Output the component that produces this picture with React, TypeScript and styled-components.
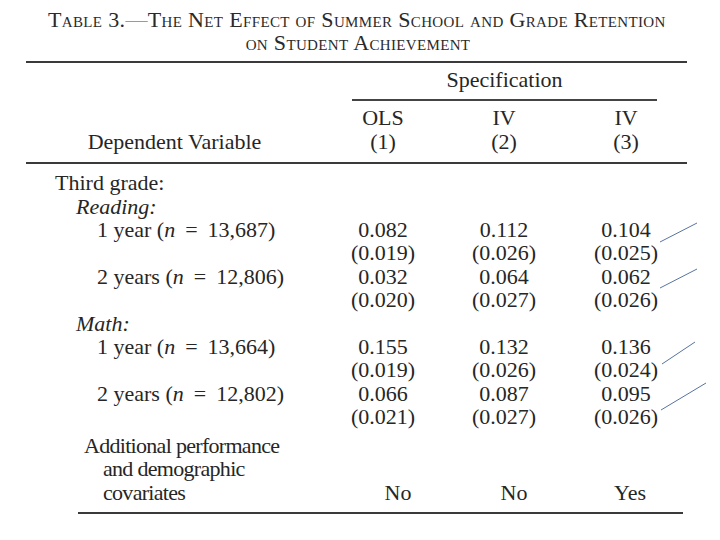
import React from "react";
import styled, { createGlobalStyle } from "styled-components";

const GlobalStyle = createGlobalStyle`
  html, body { margin: 0; padding: 0; background: #ffffff; }
  body {
    font-family: "Liberation Serif", "Times New Roman", serif;
    color: #262626;
  }
`;

const Page = styled.div`
  position: relative;
  width: 720px;
  height: 540px;
  overflow: hidden;
  background: #ffffff;
`;

const TitleBlock = styled.header`
  padding-top: 8px;
  font-size: 22px;
  line-height: 23px;
  font-variant: small-caps;
  letter-spacing: 0.35px;
  color: #2a2a2a;
`;

const TitleLine = styled.div<{ $lead?: boolean }>`
  white-space: nowrap;
  ${(p) =>
    p.$lead
      ? "padding-left: 48px;"
      : "text-align: center; padding-right: 4px;"}
`;

const Dash = styled.span`
  color: #9a9a9a;
`;

const Table = styled.section`
  margin-top: 7px;
  margin-left: 26px;
  width: 661px;
  font-size: 22px;
  line-height: 23.4px;
`;

const Rule = styled.div<{ $inset?: number; $width?: number; $thick?: number }>`
  margin-left: ${(p) => p.$inset ?? 0}px;
  width: ${(p) => (p.$width ? `${p.$width}px` : "100%")};
  border-top: ${(p) => p.$thick ?? 2}px solid #3a3a3a;
`;

const Grid = styled.div<{ $pad?: number }>`
  display: grid;
  grid-template-columns: 297px 120px 122px 122px;
  align-items: end;
  padding-top: ${(p) => p.$pad ?? 0}px;
`;

const SpecCell = styled.div`
  grid-column: 2 / 5;
  margin: 0 30px 0 29px;
  text-align: center;
`;

const SpecRule = styled.div`
  margin-top: 8px;
  border-top: 2px solid #444;
`;

const HeaderBlock = styled.div`
  padding-top: 5px;
  padding-bottom: 9px;
`;

const DepLabel = styled.div`
  text-align: center;
`;

const ColHead = styled.div`
  text-align: center;
`;

const Body = styled.div`
  padding-top: 7px;
  padding-bottom: 8px;
`;

const Label = styled.div<{ $indent: number; $italic?: boolean }>`
  padding-left: ${(p) => p.$indent}px;
  font-style: ${(p) => (p.$italic ? "italic" : "normal")};
  white-space: nowrap;
`;

const Cell = styled.div<{ $shift?: number }>`
  text-align: center;
  white-space: nowrap;
  transform: translateX(${(p) => p.$shift ?? 0}px);
`;

const Eq = styled.span`
  margin: 0 10px;
`;

const Ital = styled.i`
  font-style: italic;
`;

const Covariates = styled.div`
  padding-left: 58px;
  letter-spacing: -0.7px;
`;

const CovLine = styled.div<{ $indent?: number }>`
  padding-left: ${(p) => p.$indent ?? 0}px;
  white-space: nowrap;
`;

const Overlay = styled.svg`
  position: absolute;
  left: 0;
  top: 0;
  pointer-events: none;
`;

type Row = { label: React.ReactNode; indent: number; italic?: boolean; values?: string[] };

const N = ({ v }: { v: string }) => (
  <>
    (<Ital>n</Ital>
    <Eq>=</Eq>
    {v})
  </>
);

const rows: Row[] = [
  { label: "Third grade:", indent: 29 },
  { label: "Reading:", indent: 50, italic: true },
  { label: <>1 year <N v="13,687" /></>, indent: 71, values: ["0.082", "0.112", "0.104"] },
  { label: "", indent: 71, values: ["(0.019)", "(0.026)", "(0.025)"] },
  { label: <>2 years <N v="12,806" /></>, indent: 71, values: ["0.032", "0.064", "0.062"] },
  { label: "", indent: 71, values: ["(0.020)", "(0.027)", "(0.026)"] },
  { label: "Math:", indent: 50, italic: true },
  { label: <>1 year <N v="13,664" /></>, indent: 71, values: ["0.155", "0.132", "0.136"] },
  { label: "", indent: 71, values: ["(0.019)", "(0.026)", "(0.024)"] },
  { label: <>2 years <N v="12,802" /></>, indent: 71, values: ["0.066", "0.087", "0.095"] },
  { label: "", indent: 71, values: ["(0.021)", "(0.027)", "(0.026)"] },
];

const marks = [
  [660, 242, 697, 223],
  [660, 288, 697, 269],
  [662, 364, 695, 342],
  [661, 410, 706, 383],
];

export default function App() {
  return (
    <Page>
      <GlobalStyle />
      <TitleBlock>
        <TitleLine $lead>
          Table 3.<Dash>—</Dash>The Net Effect of Summer School and Grade Retention
        </TitleLine>
        <TitleLine>on Student Achievement</TitleLine>
      </TitleBlock>

      <Table>
        <Rule />
        <HeaderBlock>
          <Grid>
            <div />
            <SpecCell>
              Specification
              <SpecRule />
            </SpecCell>
          </Grid>
          <Grid $pad={5}>
            <div />
            <ColHead>OLS</ColHead>
            <ColHead>IV</ColHead>
            <ColHead>IV</ColHead>
            <DepLabel>Dependent Variable</DepLabel>
            <ColHead>(1)</ColHead>
            <ColHead>(2)</ColHead>
            <ColHead>(3)</ColHead>
          </Grid>
        </HeaderBlock>
        <Rule />
        <Body>
          {rows.map((r, i) => (
            <Grid key={i}>
              <Label $indent={r.indent} $italic={r.italic}>
                {r.label || "\u00a0"}
              </Label>
              {(r.values ?? ["", "", ""]).map((v, j) => (
                <Cell key={j}>{v}</Cell>
              ))}
            </Grid>
          ))}
          <Grid $pad={5}>
            <Covariates>
              <CovLine>Additional performance</CovLine>
              <CovLine $indent={19}>and demographic</CovLine>
              <CovLine $indent={19}>covariates</CovLine>
            </Covariates>
            <Cell $shift={15}>No</Cell>
            <Cell $shift={10}>No</Cell>
            <Cell $shift={4}>Yes</Cell>
          </Grid>
        </Body>
        <Rule $inset={52} $width={605} />
      </Table>

      <Overlay width={720} height={540} viewBox="0 0 720 540">
        {marks.map(([x1, y1, x2, y2], i) => (
          <line key={i} x1={x1} y1={y1} x2={x2} y2={y2} stroke="#5874a0" strokeWidth={1} />
        ))}
      </Overlay>
    </Page>
  );
}
